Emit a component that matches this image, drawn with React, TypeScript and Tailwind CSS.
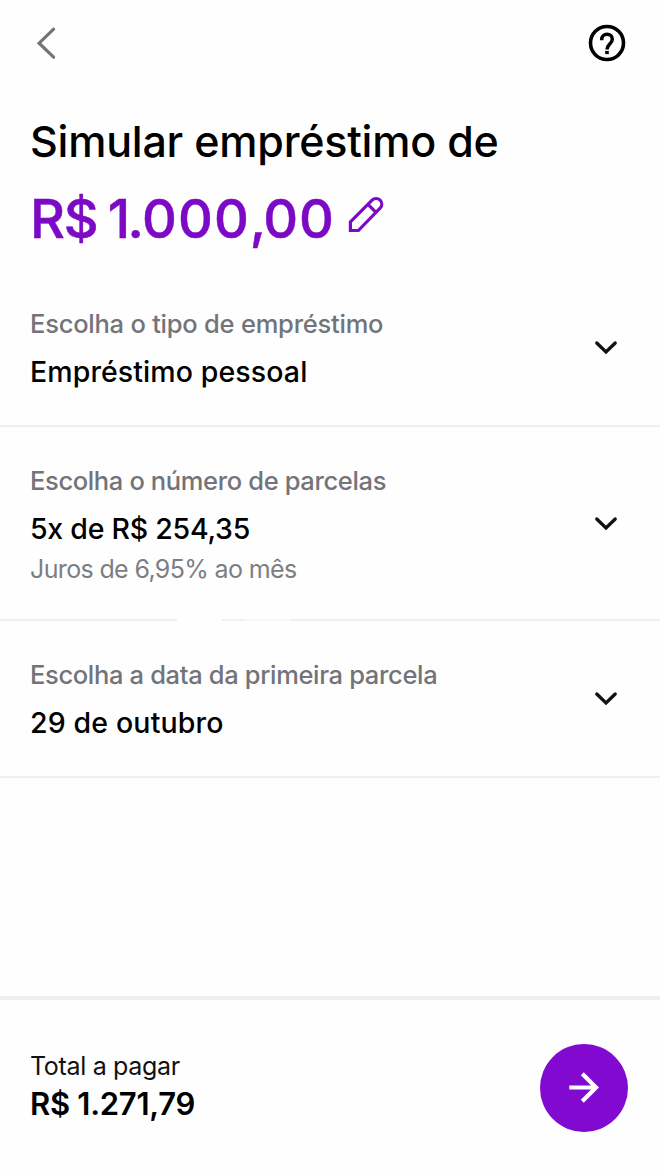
import type { ReactNode } from "react";

function Chevron() {
  return (
    <svg width="28" height="28" viewBox="0 0 28 28" fill="none" className="mb-1 shrink-0">
      <path d="M4.8 10 14 19l9.2-9" stroke="#111" strokeWidth="3.3" strokeLinecap="round" />
    </svg>
  );
}

function Row({ label, labelClass, children, divider }: { label: string; labelClass: string; children: ReactNode; divider?: ReactNode }) {
  return (
    <section>
      <button className="flex w-full items-center justify-between pt-[38px] pr-10 pb-[35px] pl-[30px] text-left">
        <span className="flex flex-col">
          <span className={`text-[25.5px] leading-8 font-medium whitespace-nowrap text-[#72747a] ${labelClass}`}>{label}</span>
          {children}
        </span>
        <Chevron />
      </button>
      {divider ?? <div className="h-0.5 bg-[#efefef]" />}
    </section>
  );
}

export default function App() {
  return (
    <main className="flex h-[1173px] w-[660px] flex-col overflow-hidden bg-[#fefefe] font-['Inter','Liberation_Sans',sans-serif] text-black">
      <header className="flex h-[86px] items-center justify-between pr-[33px] pl-[32px]">
        <button aria-label="Voltar">
          <svg width="28" height="36" viewBox="0 0 28 36" fill="none">
            <path d="M21.6 4.2 7.1 18.2l14.5 14" stroke="#72747a" strokeWidth="3.2" strokeLinecap="round" />
          </svg>
        </button>
        <button aria-label="Ajuda">
          <svg width="40" height="40" viewBox="0 0 40 40" fill="none">
            <circle cx="20" cy="20" r="16.5" stroke="#000" strokeWidth="3.6" />
            <path d="M14.7 17.2v-.8c0-3.1 2.2-5.2 5.3-5.2s5.3 2.1 5.3 5c0 4.7-5.3 4.9-5.3 10.2" stroke="#000" strokeWidth="3.5" />
            <path d="M18.2 27.9h3.6v3.2h-3.6z" fill="#000" />
          </svg>
        </button>
      </header>
      <div className="flex h-[184px] flex-col pt-[29px] pl-[30px]">
        <h1 className="text-[43px] leading-[52px] font-medium tracking-[-0.22px] whitespace-nowrap">Simular empréstimo de</h1>
        <div className="mt-5 flex">
          <span className="w-[306px] text-[54px] leading-16 font-medium whitespace-nowrap text-[#7c0ac4] [-webkit-text-stroke:0.5px_#7c0ac4]">
            <span className="tracking-[-1.2px] [word-spacing:-3px]">R$ </span>
            <span className="tracking-[-2.5px]">1</span>
            <span className="tracking-[-2px]">.</span>
            <span className="tracking-[1.1px]">000</span>
            <span className="tracking-[-3px]">,</span>
            <span className="tracking-[1px]">00</span>
          </span>
          <svg width="40" height="40" viewBox="0 0 40 40" fill="none" className="mt-[9px] ml-[9px]">
            <path d="M5.4 34.5v-8.6L27.1 4.2a5.6 5.6 0 0 1 8 8L13.4 34.5z" stroke="#7c0ac4" strokeWidth="3.2" />
            <path d="m23 8.4 8 8" stroke="#7c0ac4" strokeWidth="3.2" />
          </svg>
        </div>
      </div>
      <Row label="Escolha o tipo de empréstimo" labelClass="tracking-[-0.23px]">
        <span className="mt-3.5 text-[28.5px] leading-9 font-medium tracking-[0.1px] whitespace-nowrap">Empréstimo pessoal</span>
      </Row>
      <Row
        label="Escolha o número de parcelas"
        labelClass="tracking-[-0.36px]"
        divider={
          <div className="flex h-0.5">
            <div className="w-[177px] bg-[#efefef]" />
            <div className="w-[45px]" />
            <div className="w-[23px] bg-[#f1f1f1]" />
            <div className="w-[45px] bg-[#f8f8f8]" />
            <div className="flex-1 bg-[#efefef]" />
          </div>
        }
      >
        <span className="mt-3.5 text-[28.5px] leading-9 font-medium tracking-[-0.25px] whitespace-nowrap">5x de R$ 254,35</span>
        <span className="mt-1.5 -mb-px text-[25px] leading-8 font-normal tracking-[-0.64px] whitespace-nowrap text-[#7c7e84]">
          Juros de 6,95% ao mês
        </span>
      </Row>
      <Row label="Escolha a data da primeira parcela" labelClass="tracking-[-0.34px]">
        <span className="mt-3.5 text-[28.5px] leading-9 font-medium tracking-[0.15px] whitespace-nowrap">29 de outubro</span>
      </Row>
      <footer className="mt-auto flex h-[177px] items-center justify-between border-t-4 border-[#efefef] pr-8 pl-[30px]">
        <div className="-mt-0.5 flex flex-col">
          <span className="text-[25px] leading-8 font-normal tracking-[-0.32px] whitespace-nowrap text-[#111]">Total a pagar</span>
          <span className="mt-1 text-[31px] leading-9 font-semibold tracking-[-0.28px] whitespace-nowrap">R$ 1.271,79</span>
        </div>
        <button aria-label="Continuar" className="mt-0.5 flex size-[88px] items-center justify-center rounded-full bg-[#8209cf]">
          <svg width="32" height="32" viewBox="0 0 32 32" fill="none">
            <path d="M1.3 15.5h26.5M14.3 1.8 28 15.5 14.3 29.2" stroke="#fff" strokeWidth="4.2" />
          </svg>
        </button>
      </footer>
    </main>
  );
}
